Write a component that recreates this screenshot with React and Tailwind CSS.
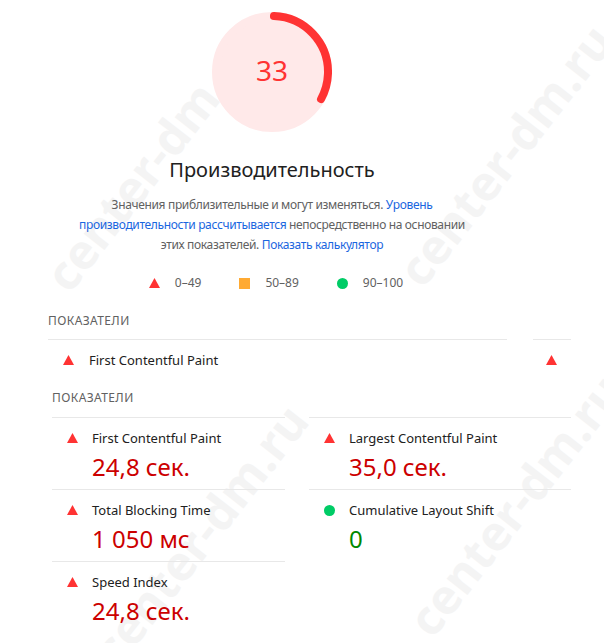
import React from 'react';

const font = { fontFamily: '"Noto Sans", "Open Sans", Arial, sans-serif' };

function Triangle({ className = '' }) {
    return (
        <svg width="11" height="10" viewBox="0 0 11 10" className={className}>
            <polygon points="5.5,0 11,10 0,10" fill="#ff3333" />
        </svg>
    );
}

function Circle({ className = '' }) {
    return <span className={`inline-block w-[11px] h-[11px] rounded-full bg-[#00cc66] ${className}`}></span>;
}

function Square({ className = '' }) {
    return <span className={`inline-block w-[11px] h-[11px] bg-[#ffaa33] ${className}`}></span>;
}

function Gauge({ score }) {
    const c = 2 * Math.PI * 56;
    return (
        <div className="relative w-[120px] h-[120px]">
            <svg width="120" height="120" viewBox="0 0 120 120">
                <circle cx="60" cy="60" r="56" fill="#ffe9e9" stroke="#ffe9e9" strokeWidth="8" />
                <circle
                    cx="60"
                    cy="60"
                    r="56"
                    fill="none"
                    stroke="#ff3333"
                    strokeWidth="8"
                    strokeLinecap="round"
                    strokeDasharray={`${(score / 100) * c - 2} ${c}`}
                    transform="rotate(-88 60 60)"
                />
            </svg>
            <div className="absolute inset-0 flex items-center justify-center text-[28px] leading-none text-[#ff3333] pb-[4px]">
                {score}
            </div>
        </div>
    );
}

const metrics = [
    [
        { label: 'First Contentful Paint', value: '24,8 сек.', status: 'fail' },
        { label: 'Total Blocking Time', value: '1 050 мс', status: 'fail' },
        { label: 'Speed Index', value: '24,8 сек.', status: 'fail' },
    ],
    [
        { label: 'Largest Contentful Paint', value: '35,0 сек.', status: 'fail' },
        { label: 'Cumulative Layout Shift', value: '0', status: 'pass' },
    ],
];

function Metric({ m }) {
    return (
        <div className="border-t border-[#e8e8e8] pt-[11px] pb-[9px] pl-[15px]">
            <div className="flex items-center h-[18px]">
                <div className="w-[25px] flex items-center">
                    {m.status === 'fail' ? <Triangle /> : <Circle />}
                </div>
                <span className="text-[13px] leading-[18px] text-[#212121]">{m.label}</span>
            </div>
            <div
                className={`mt-[7px] ml-[25px] text-[24px] leading-[26px] ${m.status === 'fail' ? 'text-[#cc0000]' : 'text-[#008800]'}`}
            >
                {m.value}
            </div>
        </div>
    );
}

// watermark centres
const marks = [
    'left-[152px] top-[160px]',
    'left-[505px] top-[155px]',
    'left-[200px] top-[535px]',
    'left-[515px] top-[505px]',
];

export default function App() {
    return (
        <div className="relative w-[604px] h-[643px] overflow-hidden bg-white" style={font}>
            {/* WATERMARK */}
            {marks.map((pos) => (
                <div
                    key={pos}
                    className={`absolute ${pos} -translate-x-1/2 -translate-y-1/2 -rotate-[52deg] text-[48px] leading-none font-bold text-[#f4f4f4] whitespace-nowrap pointer-events-none select-none`}
                >
                    center-dm.ru
                </div>
            ))}

            <div className="relative">
                {/* SCORE */}
                <div className="w-[544px] flex flex-col items-center pt-[12px]">
                    <Gauge score={33} />
                    <h1 className="mt-[24px] text-[20px] leading-[28px] text-[#212121]">Производительность</h1>
                    <div className="mt-[11px] text-[12px] leading-5 tracking-[-0.35px] text-[#616161] text-center">
                        <div>
                            Значения приблизительные и могут изменяться. <span className="text-[#1a66e0]">Уровень</span>
                        </div>
                        <div>
                            <span className="text-[#1a66e0]">производительности рассчитывается</span> непосредственно на основании
                        </div>
                        <div>
                            этих показателей. <span className="text-[#1a66e0]">Показать калькулятор</span>
                        </div>
                    </div>
                    <div className="mt-[18px] flex items-center gap-[38px] text-[12px] leading-5 text-[#616161] pl-[8px]">
                        <div className="flex items-center gap-[15px]">
                            <Triangle />
                            <span>0–49</span>
                        </div>
                        <div className="flex items-center gap-[15px]">
                            <Square />
                            <span>50–89</span>
                        </div>
                        <div className="flex items-center gap-[15px]">
                            <Circle />
                            <span>90–100</span>
                        </div>
                    </div>
                </div>

                {/* STICKY METRICS ROW */}
                <div className="pl-[48px] mt-[20px]">
                    <div className="text-[12px] leading-4 tracking-[0.4px] text-[#616161]">ПОКАЗАТЕЛИ</div>
                    <div className="mt-[10px] flex gap-[26px]">
                        <div className="w-[459px] border-t border-[#e8e8e8] pt-[11px] pl-[15px] flex items-center">
                            <div className="w-[26px] flex items-center">
                                <Triangle />
                            </div>
                            <span className="text-[13px] leading-[18px] text-[#212121]">First Contentful Paint</span>
                        </div>
                        <div className="w-[38px] border-t border-[#e8e8e8] pt-[11px] pl-[13px] flex items-center h-[30px]">
                            <Triangle />
                        </div>
                    </div>
                </div>

                {/* METRICS */}
                <div className="pl-[52px] mt-[21px]">
                    <div className="text-[12px] leading-4 tracking-[0.4px] text-[#616161]">ПОКАЗАТЕЛИ</div>
                    <div className="mt-[11px] grid grid-cols-[233px_262px] gap-x-[24px] items-start">
                        {metrics.map((col, i) => (
                            <div key={i} className="flex flex-col">
                                {col.map((m) => (
                                    <Metric key={m.label} m={m} />
                                ))}
                            </div>
                        ))}
                    </div>
                </div>
            </div>
        </div>
    );
}
